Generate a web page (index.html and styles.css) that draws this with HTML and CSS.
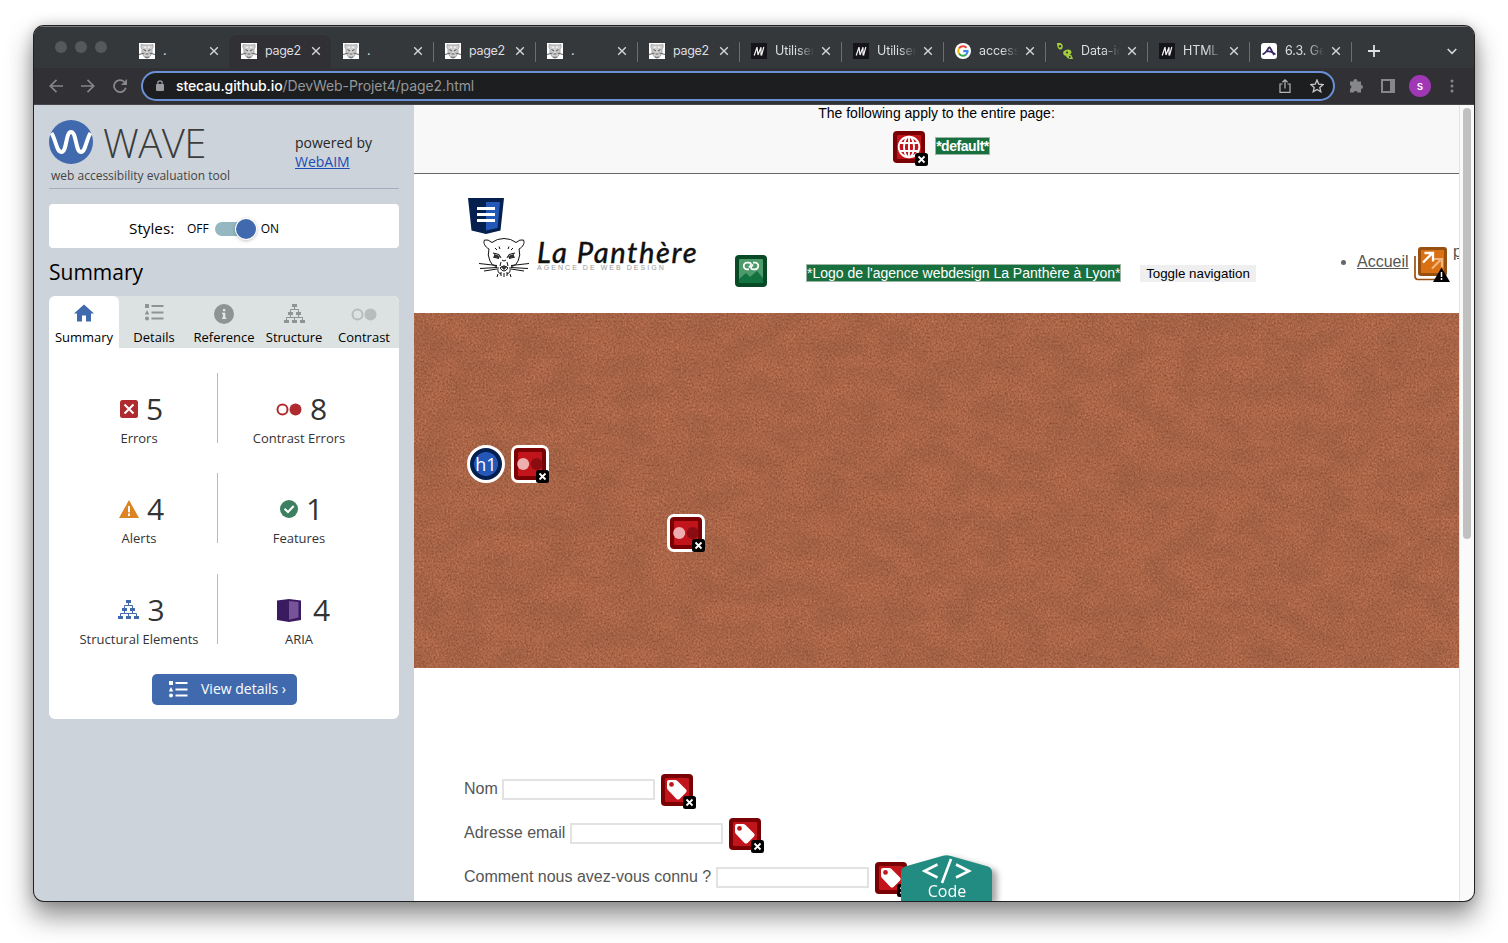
FILE: index.html
```
<!DOCTYPE html>
<html lang="fr">
<head>
<meta charset="utf-8">
<title>page2</title>
<link rel="stylesheet" href="styles.css">
</head>
<body>
<svg class="defs" width="0" height="0" aria-hidden="true">
  <symbol id="cat" viewBox="0 0 16 16"><rect width="16" height="16" fill="#fff"/><path d="M2 1.500L5 2H11L14 1.500V4.500L13 6V10L10.500 14H5.500L3 10V6L2 4.500Z" fill="#d0d0d0" stroke="#999" stroke-width=".8"/><path d="M4.500 6.500L7 8M11.500 6.500L9 8M0 11.500L5.500 10M16 11.500L10.500 10M6.500 11H9.500M6 14L8 15L10 14" stroke="#666" stroke-width="1.100" fill="none"/><path d="M5 3.500H7V5H5ZM9 3.500H11V5H9Z" fill="#eee"/></symbol>
  <symbol id="mdn" viewBox="0 0 16 16"><rect width="16" height="16" fill="#15141a"/><path d="M3.200 12.500L6 4.200L7 12M7 12L10 4.200L10 12.500M10.500 12.500L12.800 4" fill="none" stroke="#f2f2f2" stroke-width="1.200"/></symbol>
  <symbol id="close" viewBox="0 0 10 10"><path d="M1.200 1.200L8.800 8.800M8.800 1.200L1.200 8.800" stroke="#d4d6d9" stroke-width="1.400"/></symbol>
  <symbol id="badge" viewBox="0 0 13 13"><rect width="13" height="13" rx="2.500"/><path d="M3.500 3.500L9.500 9.500M9.500 3.500L3.500 9.500" stroke="#fff" stroke-width="1.800"/></symbol>
  <symbol id="list" viewBox="0 0 19 17"><path d="M0 0H4V4H0ZM2 6L4.300 10.500H-.3Z" fill="currentColor"/><circle cx="2" cy="14.500" r="2" fill="currentColor"/><path d="M6.500 2H18.500M6.500 8.500H18.500M6.500 14.500H18.500" stroke="currentColor" stroke-width="2"/></symbol>
  <symbol id="tree" viewBox="0 0 21 20"><path d="M8 0H13V3H8ZM4 8H9V11H4ZM12 8H17V11H12ZM0 16H5V19H0ZM8 16H13V19H8ZM16 16H21V19H16Z" fill="currentColor"/><path d="M10.500 3V5.500M6.500 8V5.500H14.500V8M6.500 11V13.500M14.500 11V13.500M2.500 16V13.500H18.500V16M10.500 13.500V16" fill="none" stroke="currentColor"/></symbol>
  <symbol id="contrastpair" viewBox="0 0 26 13"><circle cx="6.500" cy="6.500" r="5" fill="none" stroke="currentColor" stroke-width="2"/><circle cx="19.500" cy="6.500" r="6" fill="currentColor"/></symbol>
  <symbol id="err-contrast" viewBox="0 0 38 38"><rect width="38" height="38" rx="7" fill="#fff"/><rect x="3" y="3" width="32" height="32" rx="4" fill="#790003"/><rect x="7" y="7" width="24" height="24" rx="1" fill="#c1151b"/><circle cx="12.200" cy="19" r="6" fill="#eeaeb0"/><circle cx="25.700" cy="19" r="6" fill="#8b0d12"/><use href="#badge" x="25" y="25" width="13" height="13"/></symbol>
  <symbol id="err-label" viewBox="0 0 36 36"><rect width="32" height="32" rx="4" fill="#790003"/><rect x="4" y="4" width="24" height="24" rx="1" fill="#c1151b"/><path fill-rule="evenodd" d="M8 6H14Q15.500 6 16.500 7L25 15.500Q26.500 17 25 18.500L18.500 25Q17 26 15.500 25L7 16Q6 15 6 13.500V8Q6 6 8 6ZM10.500 8A2.400 2.400 0 1 0 10.500 12.800A2.400 2.400 0 1 0 10.500 8Z" fill="#fff"/><use href="#badge" x="22" y="22" width="13" height="13"/></symbol>
</svg>

<div class="window">
  <header class="tabstrip">
    <div class="lights"><i></i><i></i><i></i></div>
    <div class="tab"><svg class="fav"><use href="#cat"/></svg><span>.</span><svg class="x"><use href="#close"/></svg></div>
    <div class="tab active"><svg class="fav"><use href="#cat"/></svg><span>page2</span><svg class="x"><use href="#close"/></svg></div>
    <div class="tab"><svg class="fav"><use href="#cat"/></svg><span>.</span><svg class="x"><use href="#close"/></svg></div>
    <div class="tab sep"><svg class="fav"><use href="#cat"/></svg><span>page2</span><svg class="x"><use href="#close"/></svg></div>
    <div class="tab sep"><svg class="fav"><use href="#cat"/></svg><span>.</span><svg class="x"><use href="#close"/></svg></div>
    <div class="tab sep"><svg class="fav"><use href="#cat"/></svg><span>page2</span><svg class="x"><use href="#close"/></svg></div>
    <div class="tab sep"><svg class="fav"><use href="#mdn"/></svg><span class="fade">Utiliser</span><svg class="x"><use href="#close"/></svg></div>
    <div class="tab sep"><svg class="fav"><use href="#mdn"/></svg><span class="fade">Utiliser</span><svg class="x"><use href="#close"/></svg></div>
    <div class="tab sep"><svg class="fav" viewBox="0 0 16 16"><circle cx="8" cy="8" r="8" fill="#fff"/><g fill="none" stroke-width="2.100"><path d="M4 5.500A4.700 4.700 0 0 1 11.500 4.800" stroke="#ea4335"/><path d="M4 5.500A4.700 4.700 0 0 0 4 10.500" stroke="#fbbc05"/><path d="M4 10.500A4.700 4.700 0 0 0 11.200 11.500" stroke="#34a853"/><path d="M8.200 8.100H12.600A4.600 4.600 0 0 1 11.200 11.500" stroke="#4285f4"/></g></svg><span class="fade">access</span><svg class="x"><use href="#close"/></svg></div>
    <div class="tab sep"><svg class="fav" viewBox="0 0 16 16"><g fill="#a5cc3c"><path d="M0 0H3.500Q6.500 1.500 5.500 5Q4.500 7 2.500 6.500Q0 5 0 0Z"/><ellipse cx="10.300" cy="9.600" rx="4.200" ry="2.900" transform="rotate(-15 10.300 9.600)"/><path d="M8.500 12.500Q11.500 10.800 14.500 12.200L16 16Q10.500 16.800 8.500 12.500Z"/></g><g fill="#35383b"><circle cx="3" cy="3.200" r="1.200"/><circle cx="10" cy="9.500" r="1.100"/><circle cx="12.800" cy="14" r="1"/></g></svg><span class="fade">Data-ic</span><svg class="x"><use href="#close"/></svg></div>
    <div class="tab sep"><svg class="fav"><use href="#mdn"/></svg><span class="fade">HTML :</span><svg class="x"><use href="#close"/></svg></div>
    <div class="tab sep"><svg class="fav" viewBox="0 0 16 16"><rect width="16" height="16" rx="3" fill="#fff"/><path d="M1.500 11.500Q5 10 7.500 5Q8.500 3.500 9.500 5.500L13 12M6 8.500Q11 8 14.500 11.500" fill="none" stroke="#3a2a63" stroke-width="1.700"/></svg><span class="fade">6.3. Ge</span><svg class="x"><use href="#close"/></svg></div>
    <div class="newtab sep"><svg width="12" height="12" viewBox="0 0 12 12"><path d="M6 0V12M0 6H12" stroke="#dfe1e4" stroke-width="1.800"/></svg></div>
    <svg class="chev" width="10" height="7" viewBox="0 0 10 7"><path d="M.7 1L5 5.300L9.300 1" fill="none" stroke="#d4d6d9" stroke-width="1.600"/></svg>
  </header>

  <div class="toolbar">
    <svg class="nav" viewBox="0 0 14 14"><path d="M14 7H1.500M7.500 .8L1.300 7L7.500 13.200" fill="none" stroke="#86878a" stroke-width="1.700"/></svg>
    <svg class="nav" viewBox="0 0 14 14"><path d="M0 7H12.500M6.500 .8L12.700 7L6.500 13.200" fill="none" stroke="#86878a" stroke-width="1.700"/></svg>
    <svg class="nav" viewBox="0 0 14 14"><path d="M12.800 8.800A6 6 0 1 1 11.300 2.800" fill="none" stroke="#86878a" stroke-width="1.800"/><path d="M14 0V6H8Z" fill="#86878a"/></svg>
    <div class="omnibox">
      <svg class="lock" width="8" height="11" viewBox="0 0 8 11"><rect y="4" width="8" height="7" rx="1" fill="#9a9ca1"/><path d="M1.800 5V3A2.200 2.200 0 0 1 6.200 3V5" fill="none" stroke="#9a9ca1" stroke-width="1.200"/></svg>
      <div class="url"><b>stecau.github.io</b>/DevWeb-Projet4/page2.html</div>
      <svg class="share" width="12" height="14" viewBox="0 0 12 14"><path d="M3.500 5H1V13.300H11V5H8.500M6 9.500V1M3.400 3.300L6 .9L8.600 3.300" fill="none" stroke="#b4b6b9" stroke-width="1.200"/></svg>
      <svg class="star" width="14" height="14" viewBox="0 0 14 14"><path d="M7 1L8.700 5.100L13.200 5.500L9.800 8.400L10.800 12.800L7 10.500L3.200 12.800L4.200 8.400L.8 5.500L5.300 5.100Z" fill="none" stroke="#c6c8cb" stroke-width="1.300"/></svg>
    </div>
    <svg class="ext" width="15" height="15" viewBox="0 0 15 15"><path d="M1 3.500H4.500A2 2 0 1 1 8.300 3.500H12V7A2 2 0 1 1 12 11V14.500H8.500A2 2 0 0 0 4.700 14.500H1V10.800A2 2 0 0 0 1 7Z" fill="#86878a"/></svg>
    <svg class="side" width="14" height="14" viewBox="0 0 14 14"><rect x="1" y="1" width="12" height="12" fill="none" stroke="#86878a" stroke-width="2"/><rect x="9" y="1" width="4" height="12" fill="#86878a"/></svg>
    <div class="avatar">s</div>
    <svg width="4" height="14" viewBox="0 0 4 14"><g fill="#86878a"><circle cx="2" cy="2" r="1.500"/><circle cx="2" cy="7" r="1.500"/><circle cx="2" cy="12" r="1.500"/></g></svg>
  </div>

  <div class="viewport">
    <aside class="wave">
      <div class="brand">
        <div class="brandmark">
          <div class="wordmark">
            <svg width="44" height="44" viewBox="0 0 44 44"><circle cx="22" cy="22" r="22" fill="#4169ad"/><path d="M2.500 13C7 20 7.500 32 12.500 32C18 32 16.500 12 22 12C27.500 12 26.500 32 32 32C36.500 32 37 20 41.500 13" fill="none" stroke="#fff" stroke-width="4"/></svg>
            <span>WAVE</span>
          </div>
          <div class="tagline">web accessibility evaluation tool</div>
        </div>
        <div class="powered">powered by<br><a>WebAIM</a></div>
      </div>
      <div class="styles"><span class="lbl">Styles:</span><span>OFF</span><i class="switch"><b></b></i><span>ON</span></div>
      <h2>Summary</h2>
      <div class="card">
        <nav>
          <div class="on"><svg width="20" height="18" viewBox="0 0 20 18"><path d="M10 .5L20 9.500H17V17.500H12V11.500H8V17.500H3V9.500H0Z" fill="#4169ad"/></svg>Summary</div>
          <div><svg class="g" width="19" height="17"><use href="#list"/></svg>Details</div>
          <div><svg width="20" height="20" viewBox="0 0 20 20"><circle cx="10" cy="10" r="10" fill="#8f9394"/><path d="M9 5H11.300V7.200H9ZM8 8.700H11.300V13.500H12.300V15H8V13.500H9V10.200H8Z" fill="#e3e6e7"/></svg>Reference</div>
          <div><svg class="g" width="21" height="20"><use href="#tree"/></svg>Structure</div>
          <div><svg class="lg" width="26" height="20"><use href="#contrastpair" y="4" width="26" height="13"/></svg>Contrast</div>
        </nav>
        <div class="stats">
          <div><p><svg width="18" height="18" viewBox="0 0 18 18"><rect width="18" height="18" rx="2.500" fill="#b02b30"/><path d="M4.500 4.500L13.500 13.500M13.500 4.500L4.500 13.500" stroke="#fff" stroke-width="2"/></svg>5</p>Errors</div>
          <div><p><svg class="red" width="26" height="13"><use href="#contrastpair"/></svg>8</p>Contrast Errors</div>
          <div><p><svg width="20" height="18" viewBox="0 0 20 18"><path d="M10 0L20 18H0Z" fill="#dc8424"/><path d="M10 6V12.300M10 13.500V16" stroke="#fff" stroke-width="2"/></svg>4</p>Alerts</div>
          <div><p><svg width="18" height="18" viewBox="0 0 18 18"><circle cx="9" cy="9" r="9" fill="#3d8061"/><path d="M4.500 8.700L8 12L13.700 6" fill="none" stroke="#fff" stroke-width="2"/></svg>1</p>Features</div>
          <div><p><svg class="blue" width="21" height="20"><use href="#tree"/></svg>3</p>Structural Elements</div>
          <div><p class="wide"><svg width="24" height="23" viewBox="0 0 24 23"><path d="M0 1.500L12 0L24 1.500V21L12 23L0 21Z" fill="#3b1b60"/><path d="M12 2L21.500 3V18.500L12 20.700Z" fill="#77539a"/></svg>4</p>ARIA</div>
        </div>
        <div class="btn"><svg width="19" height="17"><use href="#list"/></svg><span>View details ›</span></div>
      </div>
    </aside>

    <main>
      <section class="pagewide">
        <div class="note">The following apply to the entire page:</div>
        <div class="lang">
          <svg width="36" height="36" viewBox="0 0 36 36"><rect width="32" height="32" rx="4" fill="#790003"/><rect x="4" y="4" width="24" height="24" rx="1" fill="#c1151b"/><g fill="none" stroke="#fff" stroke-width="1.900"><circle cx="16" cy="16" r="10.300"/><ellipse cx="16" cy="16" rx="5" ry="10.300"/><path d="M16 5V27M7 12H25M7 20H25"/></g><use href="#badge" x="22" y="22" width="13" height="13"/></svg>
          <span class="tag bold">*default*</span>
        </div>
      </section>

      <section class="sitehead">
        <svg class="struct" width="36" height="36" viewBox="0 0 36 36"><path d="M0 0H36L32.500 32.500L18 36L3.500 32.500Z" fill="#05204f"/><path d="M18 4H32L29.500 30L18 32.500Z" fill="#2458b8"/><path d="M9 10.500H27M9 16.500H27M9 22.500H27" stroke="#fff" stroke-width="3"/></svg>
        <div class="row">
          <div class="logo">
            <svg width="50" height="42" viewBox="0 0 50 42"><g fill="none" stroke="#111" stroke-width="1"><path d="M10 12C6 10 4 6 5.500 3Q9 2 13 5.500M40 12C44 10 46 6 44.500 3Q41 2 37 5.500M13 5.500Q18 1.500 25 1.500Q32 1.500 37 5.500M10 12Q8 18 11 24Q12 28 18 30M40 12Q42 18 39 24Q38 28 32 30"/><path d="M14 16L20 17.500L22 21M36 16L30 17.500L28 21M14 20L20 21.500M36 20L30 21.500M16 11L18 13M20 9.500L21 12M34 11L32 13M30 9.500L29 12M23 23Q25 25 27 23M21 29L22 25M29 29L28 25"/><path d="M0 26.500L18 28.500M1 31.500L18 30.500M5 34L18 32M50 26.500L32 28.500M49 31.500L32 30.500M45 34L32 32"/><path d="M19 30Q18 36 22 37M31 30Q32 36 28 37M21 31Q25 27 29 31Q27 34 25 34Q23 34 21 31M22 35V39M25 36V40M28 35V39M19 37L18 40M31 37L32 40"/></g><path d="M15 17L21 19L20 21.500L15 20ZM35 17L29 19L30 21.500L35 20ZM22 30Q25 27.500 28 30L25 33Z" fill="#333"/></svg>
            <div class="name">La Panthère<small>AGENCE DE WEB DESIGN</small></div>
          </div>
          <svg class="alticon" width="32" height="32" viewBox="0 0 32 32"><rect width="32" height="32" rx="4" fill="#084a26"/><rect x="4" y="4" width="24" height="24" rx="1" fill="#4d9a6b"/><path d="M4 24L11 18L15 22L22 16L28 23V28H4Z" fill="#137340"/><g fill="none" stroke="#fff" stroke-width="1.700"><path d="M14 14.300H12A3.300 3.300 0 0 1 12 7.700H14Q17 8 15.500 10.500L14 12.500"/><path d="M18 7.700H20A3.300 3.300 0 0 1 20 14.300H18Q15 14 16.500 11.500L18 9.500"/></g></svg>
          <span class="tag alt">*Logo de l'agence webdesign La Panthère à Lyon*</span>
          <span class="toggle">Toggle navigation</span>
          <i class="bullet"></i>
          <a class="home">Accueil</a>
          <svg class="redundant" width="36" height="36" viewBox="0 0 36 36"><path d="M1 9V29Q1 32.500 4 32.500H26" fill="none" stroke="#984f12" stroke-width="1.700"/><rect x="4" y="0" width="29" height="29" rx="3" fill="#984f12"/><rect x="7" y="3" width="23" height="23" fill="#d97114"/><path d="M18 21.500L27.500 12M19.500 12H28V20.500" fill="none" stroke="#f1b57f" stroke-width="2.200"/><path d="M9 15.500L18.500 6M10.500 6H19V14.500" fill="none" stroke="#fff" stroke-width="2.300"/><path d="M27.500 20.500L36 35H19Z"/><path d="M27.500 25V30M27.500 31V33" stroke="#fff" stroke-width="1.500"/></svg>
          <a class="cut">p</a>
        </div>
      </section>

      <section class="hero">
        <svg class="texture" width="1045" height="355" aria-hidden="true"><filter id="grain" x="0" y="0" width="100%" height="100%" color-interpolation-filters="sRGB"><feTurbulence type="fractalNoise" baseFrequency=".55 .5" numOctaves="3" seed="7" result="fine"/><feColorMatrix in="fine" values=".26 .1 0 0 .495  .24 .1 0 0 .23  .2 .08 0 0 .142  0 0 0 0 1" result="base"/><feTurbulence type="fractalNoise" baseFrequency=".03 .045" numOctaves="3" seed="3"/><feColorMatrix values="0 0 0 0 .42  0 0 0 0 .27  0 0 0 0 .18  .35 0 0 0 -.1" result="patch"/><feMerge><feMergeNode in="base"/><feMergeNode in="patch"/></feMerge></filter><rect width="1045" height="355" fill="#ac6546" filter="url(#grain)"/></svg>
        <div class="first"><div class="h1">h1</div><svg width="38" height="38"><use href="#err-contrast"/></svg></div>
        <div class="second"><svg width="38" height="38"><use href="#err-contrast"/></svg></div>
      </section>

      <section class="form">
        <div class="field"><label class="f1">Nom</label><i class="input"></i><svg width="36" height="36"><use href="#err-label"/></svg></div>
        <div class="field"><label class="f2">Adresse email</label><i class="input"></i><svg width="36" height="36"><use href="#err-label"/></svg></div>
        <div class="field"><label class="f3">Comment nous avez-vous connu ?</label><i class="input"></i><svg width="36" height="36"><use href="#err-label"/></svg></div>
      </section>
      <div class="code">
        <svg width="91" height="46" viewBox="0 0 91 46"><path d="M0 46V17Q0 13 4 11.500L42 .8Q45.500 -.3 49 .8L87 11.500Q91 13 91 17V46Z" fill="#228c82"/><path d="M36.500 9.500L23.500 16L36.500 22.500M55 9.500L68 16L55 22.500M50 4L41 28" fill="none" stroke="#fff" stroke-width="2.600"/></svg>
        <span>Code</span>
      </div>
    </main>
    <div class="scroll"><i></i></div>
  </div>
</div>
</body>
</html>
```
FILE: styles.css
```
* { box-sizing: border-box; }
body { margin: 0; width: 1508px; height: 943px; padding: 26px 34px 0; overflow: hidden; background: #fff; font-family: "Open Sans", sans-serif; }
svg { flex: none; display: block; }
.defs { position: absolute; }
.window { width: 1440px; height: 875px; border-radius: 10px; overflow: hidden; background: #303035; }
body::before { content: ""; position: absolute; z-index: -1; left: 34px; top: 26px; width: 1440px; height: 875px; border-radius: 10px; box-shadow: 0 0 0 1px #222, 0 14px 26px 2px rgba(0,0,0,.42), 0 0 14px rgba(0,0,0,.2); }

.tabstrip { display: flex; height: 42px; background: #35383b; border-top: 1px solid #77797b; font-family: Inter, sans-serif; }
.lights { display: flex; gap: 8px; width: 93px; padding: 14px 0 0 21px; }
.lights i { width: 12px; height: 12px; border-radius: 50%; background: #56585b; }
.tab { position: relative; display: flex; align-items: center; width: 102px; padding: 7px 10px 0 12px; color: #dcdee0; font-size: 12.500px; }
.tab.active { background: #303035; border-radius: 8px 8px 0 0; margin-top: 8px; padding-top: 0; padding-bottom: 1px; }
.sep::before { content: ""; position: absolute; left: 0; top: 15px; width: 1px; height: 20px; background: #6c6f72; }
.fav { width: 16px; height: 16px; }
.tab span { flex: 1; margin: -1px 0 0 8px; overflow: hidden; white-space: nowrap; letter-spacing: -.3px; }
.tab .fade { -webkit-mask-image: linear-gradient(90deg, #000 55%, transparent 95%); mask-image: linear-gradient(90deg, #000 55%, transparent 95%); margin-right: 5px; letter-spacing: -.1px; }
.x { width: 10px; height: 10px; }
.newtab { position: relative; padding: 18px 0 0 17px; width: 40px; }
.chev { margin: 21px 0 0 56px; }

.toolbar { display: flex; align-items: center; height: 37px; padding: 0 20px 1px 15px; background: #303035; border-bottom: 1px solid #46464b; }
.nav { width: 14px; height: 14px; margin-right: 18px; }
.omnibox { display: flex; align-items: center; width: 1194px; height: 30px; margin-left: -4px; padding: 0 10px 0 13px; border: 2px solid #6a91d6; border-radius: 15px; background: #1c1e20; }
.url { flex: 1; margin-left: 12px; color: #95979a; font: 14px Inter, sans-serif; letter-spacing: -.09px; }
.url b { color: #fff; font-weight: 500; }
.star { margin-left: 19px; margin-right: -1px; }
.ext { margin-left: 14px; }
.side { margin-left: 17px; }
.avatar { width: 22px; height: 22px; margin: 0 19px 0 14px; border-radius: 50%; background: #a037b4; color: #fff; font: 500 12px/21px Inter, sans-serif; text-align: center; }

.viewport { display: flex; height: 796px; }
.wave { width: 380px; padding: 15px 15px 0; background: #ccd3da; color: #000; }
.brand { display: flex; justify-content: space-between; height: 69px; border-bottom: 1px solid #a3aebc; }
.wordmark { display: flex; gap: 10px; height: 44px; color: #3c3c3c; font-size: 40px; line-height: 46px; font-weight: 300; letter-spacing: -.5px; }
.tagline { margin: 3px 0 0 2px; color: #444; font-size: 12px; line-height: 18px; white-space: nowrap; }
.powered { width: 104px; padding-top: 13px; color: #262626; font-size: 14px; line-height: 19px; }
.powered a { color: #1d4cb5; text-decoration: underline; }
.styles { display: flex; align-items: center; height: 44px; margin-top: 15px; padding: 5px 0 0 80px; border-radius: 4px; background: #fff; font-size: 12px; }
.styles .lbl { margin: -2px 12px 0 0; width: 46px; font-size: 15.300px; white-space: nowrap; }
.switch { display: flex; justify-content: flex-end; align-items: center; width: 41px; height: 14px; margin: 0 5px 0 6px; border-radius: 7px; background: #94b7c1; }
.switch b { width: 20px; height: 20px; border-radius: 50%; background: #4169ad; box-shadow: 0 0 0 1px #fff, 0 1px 4px rgba(0,0,0,.4); }
.wave h2 { margin: 9px 0 10px; height: 29px; font-size: 21px; line-height: 30px; font-weight: 400; }
.card { height: 423px; border-radius: 6px; background: #fff; overflow: hidden; }
.card nav { display: grid; grid-template-columns: repeat(5, 70px); height: 52px; background: #dce1e2; }
.card nav div { display: flex; flex-direction: column; align-items: center; padding: 8px 0 2px; font-size: 13px; line-height: 18px; white-space: nowrap; }
.card nav svg { margin-bottom: auto; }
.card nav .on { border-radius: 6px 6px 0 0; background: #fff; }
.g { color: #8f9394; }
.lg { color: #b9bcbd; }
.red { color: #b02b30; }
.blue { color: #4169ad; }
.stats { display: grid; grid-template: 100px 101px 70px / 157px 162px; padding: 25px 0 0 12px; color: #333; font-size: 13px; line-height: 18px; text-align: center; }
.stats div { height: 70px; }
.stats div:nth-child(odd) { border-right: 1px solid #bbb; }
.stats p { display: flex; justify-content: center; align-items: center; gap: 8px; height: 36px; margin: 18px 0 2px; padding-left: 5px; font-size: 30px; }
.stats .wide { gap: 12px; padding-left: 9px; }
.btn { display: flex; align-items: center; width: 145px; height: 31px; margin: 30px 0 0 103px; padding-left: 17px; gap: 13px; border-radius: 5px; background: #4169ad; color: #fff; font-size: 14px; white-space: nowrap; }
.btn span { margin-top: -2px; }

main { position: relative; width: 1045px; height: 796px; overflow: hidden; background: #fff; color: #555; font-family: "Liberation Sans", Arial, sans-serif; }
.pagewide { height: 69px; background: #f8f8f8; border-bottom: 1px solid #666; color: #000; font-size: 14px; text-align: center; }
.note { line-height: 16px; }
.lang { display: flex; gap: 6px; padding: 10px 0 0 479px; }
.tag { background: #19703f; border: 1px solid #9cb5a7; color: #fff; white-space: nowrap; }
.bold { height: 18px; margin-top: 6px; width: 55px; font-size: 14px; font-weight: 700; line-height: 16px; letter-spacing: -.45px; }
.sitehead { height: 139px; padding: 24px 0 0 54px; }
.row { display: flex; }
.row > * { flex: none; }
.logo { display: flex; width: 267px; padding: 3px 0 0 11px; }
.name { margin: -2px 0 0 8px; height: 38px; color: #111; font: italic 500 29px/34px Lato, sans-serif; letter-spacing: 1.600px; white-space: nowrap; -webkit-text-stroke: .3px #111; }
.name small { display: block; margin-top: -5px; color: #999; font: 7px/8px "Liberation Sans", sans-serif; letter-spacing: 2.050px; -webkit-text-stroke: 0; }
.alticon { margin-top: 21px; }
.alt { width: 315px; height: 18px; margin: 30px 0 0 39px; font-size: 14px; line-height: 16px; }
.toggle { width: 116px; height: 17px; margin: 31px 0 0 19px; background: #efefef; color: #000; font-size: 13.333px; line-height: 17px; text-align: center; white-space: nowrap; }
.bullet { width: 5px; height: 5px; margin: 26px 0 0 85px; border-radius: 50%; background: #666; }
.home { margin: 18px 0 0 11px; width: 52px; font-size: 16px; line-height: 19px; text-decoration: underline; }
.redundant { margin: 13px 0 0 5px; }
.cut { margin: 9px 0 0 3px; font-size: 16px; line-height: 18px; text-decoration: underline; }
.hero { position: relative; height: 355px; padding: 132px 0 0 53px; }
.texture { position: absolute; left: 0; top: 0; }
.first, .second { position: relative; display: flex; gap: 6px; }
.second { margin: 31px 0 0 200px; }
.h1 { width: 38px; height: 38px; border: 3px solid #fff; border-radius: 50%; background: radial-gradient(circle, #2458b8 0 11.500px, #05204f 12.300px); color: #fff; font: 18px/32px "Open Sans", sans-serif; text-align: center; }
.form { padding: 106px 0 0 50px; font-size: 16px; }
.field { display: flex; height: 44px; }
.field label { line-height: 29px; white-space: nowrap; }
.f1 { width: 38px; }
.f2 { width: 106px; }
.f3 { width: 252px; }
.input { width: 153px; height: 21px; margin: 5px 6px 0 0; border: 2px solid #e2e2e2; }
.code { position: absolute; left: 487px; top: 750px; width: 91px; height: 46px; color: #fff; filter: drop-shadow(5px 3px 3px rgba(0,0,0,.35)); }
.code span { position: absolute; left: 1px; right: 0; top: 25px; font: 16px/22px "Open Sans", sans-serif; text-align: center; }
.scroll { width: 15px; border-left: 1px solid #e4e4e4; background: #fafafa; }
.scroll i { display: block; width: 8px; height: 431px; margin: 3px 0 0 3px; border-radius: 4px; background: #c1c1c1; }
```
